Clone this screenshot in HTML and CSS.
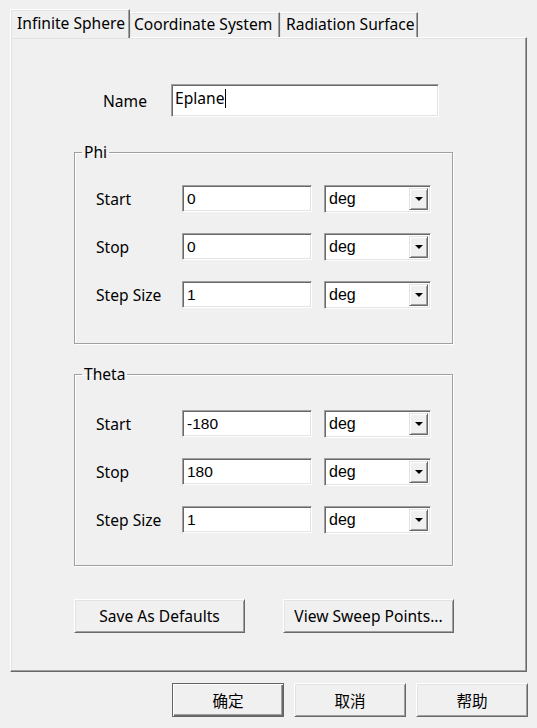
FILE: index.html
```html
<!DOCTYPE html>
<html>
<head>
<meta charset="utf-8">
<link rel="stylesheet" href="styles.css">
</head>
<body>
<div class="tabs">
  <div class="tab tab--active">Infinite Sphere</div>
  <div class="tab tab--coord">Coordinate System</div>
  <div class="tab tab--rad">Radiation Surface</div>
</div>
<div class="panel">
  <div class="name-row">
    <span class="name-label">Name</span>
    <div class="textbox textbox--name">Eplane<span class="caret"></span></div>
  </div>

  <fieldset class="group group--phi">
    <legend>Phi</legend>
    <div class="row"><span class="lbl">Start</span><div class="textbox num">0</div><div class="combo"><span class="combo-val">deg</span><span class="combo-btn"><span class="tri"></span></span></div></div>
    <div class="row"><span class="lbl">Stop</span><div class="textbox num">0</div><div class="combo"><span class="combo-val">deg</span><span class="combo-btn"><span class="tri"></span></span></div></div>
    <div class="row"><span class="lbl">Step Size</span><div class="textbox num">1</div><div class="combo"><span class="combo-val">deg</span><span class="combo-btn"><span class="tri"></span></span></div></div>
  </fieldset>

  <fieldset class="group group--theta">
    <legend>Theta</legend>
    <div class="row"><span class="lbl">Start</span><div class="textbox num">-180</div><div class="combo"><span class="combo-val">deg</span><span class="combo-btn"><span class="tri"></span></span></div></div>
    <div class="row"><span class="lbl">Stop</span><div class="textbox num">180</div><div class="combo"><span class="combo-val">deg</span><span class="combo-btn"><span class="tri"></span></span></div></div>
    <div class="row"><span class="lbl">Step Size</span><div class="textbox num">1</div><div class="combo"><span class="combo-val">deg</span><span class="combo-btn"><span class="tri"></span></span></div></div>
  </fieldset>

  <div class="action-row">
    <div class="btn btn--wide">Save As Defaults</div>
    <div class="btn btn--wide">View Sweep Points...</div>
  </div>
</div>
<div class="footer">
  <div class="btn btn--foot btn--default">确定</div>
  <div class="btn btn--foot">取消</div>
  <div class="btn btn--foot">帮助</div>
</div>
</body>
</html>
```

FILE: styles.css
```css
* { box-sizing: border-box; }
html, body { margin: 0; padding: 0; }
body {
  width: 537px;
  height: 728px;
  overflow: hidden;
  background: #f0f0f0;
  color: #000;
  font: 15.6px/20px "Noto Sans", "Noto Sans CJK SC", sans-serif;
}

/* Tabs */
.tabs {
  display: flex;
  align-items: flex-end;
  height: 37px;
  padding: 10px 0 0 10px;
}
.tab {
  height: 25px;
  line-height: 23px;
  border-top: 1px solid #fff;
  border-left: 1px solid #fff;
  border-right: 1px solid #696969;
  box-shadow: inset -1px 0 0 #a0a0a0, inset 1px 1px 0 #e3e3e3;
  background: #f0f0f0;
  white-space: nowrap;
}
.tab--active {
  position: relative;
  z-index: 1;
  height: 29px;
  margin-bottom: -1px;
  width: 120px;
  padding-left: 6px;
  line-height: 26px;
}
.tab--coord { width: 150px; padding-left: 4px; border-left: none; }
.tab--rad { width: 138px; padding-left: 6px; border-left: none; }

/* Panel */
.panel {
  margin-left: 10px;
  width: 517px;
  height: 635px;
  border-top: 1px solid #fff;
  border-left: 1px solid #fff;
  border-right: 1px solid #696969;
  border-bottom: 1px solid #696969;
  box-shadow: inset -1px -1px 0 #a0a0a0, inset 1px 1px 0 #e3e3e3;
  padding-top: 46px;
}

.name-row {
  display: flex;
  align-items: center;
  padding-left: 92px;
}
.name-label { width: 68px; }

.textbox {
  background: #fff;
  border: 1px solid;
  border-color: #a0a0a0 #fff #fff #a0a0a0;
  box-shadow: inset 1px 1px 0 #696969, inset -1px -1px 0 #e3e3e3;
  white-space: nowrap;
}
.textbox--name {
  width: 268px;
  height: 33px;
  padding: 3px 0 0 3px;
  line-height: 20px;
  display: flex;
  align-items: flex-start;
}
.caret {
  display: inline-block;
  width: 1px;
  height: 19px;
  background: #000;
  margin-left: 1px;
  margin-top: 1px;
}
.num {
  width: 130px;
  height: 27px;
  padding-left: 4px;
  line-height: 25px;
  font-family: "Liberation Sans", Arial, sans-serif;
  font-size: 15.5px;
}

/* Groups */
.group {
  margin: 0 0 0 63px;
  width: 379px;
  height: 202px;
  padding: 0;
  border: 1px solid #a0a0a0;
  box-shadow: 1px 1px 0 #fff, inset 1px 1px 0 #fff;
  min-inline-size: 0;
}
.group legend {
  margin-left: 7px;
  padding: 0 2px;
  line-height: 20px;
}
.group--phi { margin-top: 25px; padding-top: 23px; }
.group--theta { margin-top: 20px; padding-top: 26px; }

.row {
  display: flex;
  align-items: center;
  height: 27px;
  margin: 0 0 21px 21px;
}
.lbl { width: 86px; }

.combo {
  margin-left: 12px;
  width: 107px;
  height: 28px;
  background: #fff;
  border: 1px solid;
  border-color: #a0a0a0 #fff #fff #a0a0a0;
  box-shadow: inset 1px 1px 0 #696969, inset -1px -1px 0 #e3e3e3;
  display: flex;
  align-items: stretch;
  padding: 2px;
}
.combo-val {
  flex: 1;
  padding-left: 2px;
  line-height: 22px;
  font-family: "Liberation Sans", Arial, sans-serif;
  font-size: 16px;
}
.combo-btn {
  width: 19px;
  background: #f0f0f0;
  border-top: 1px solid #e3e3e3;
  border-left: 1px solid #e3e3e3;
  border-right: 1px solid #696969;
  border-bottom: 1px solid #696969;
  box-shadow: inset 1px 1px 0 #fff, inset -1px -1px 0 #a0a0a0;
  display: flex;
  align-items: center;
  justify-content: center;
}
.tri {
  width: 0;
  height: 0;
  border-left: 4px solid transparent;
  border-right: 4px solid transparent;
  border-top: 4px solid #000;
}

/* Buttons */
.btn {
  height: 34px;
  background: #f0f0f0;
  border-top: 1px solid #fff;
  border-left: 1px solid #fff;
  border-right: 1px solid #696969;
  border-bottom: 1px solid #696969;
  box-shadow: inset 1px 1px 0 #e3e3e3, inset -1px -1px 0 #a0a0a0;
  display: flex;
  align-items: center;
  justify-content: center;
  white-space: nowrap;
}
.action-row {
  display: flex;
  gap: 38px;
  margin: 33px 0 0 63px;
}
.btn--wide { width: 171px; }

.footer {
  display: flex;
  gap: 10px;
  padding: 11px 0 0 172px;
}
.btn--foot {
  width: 112px;
  font-family: "Noto Sans CJK SC", sans-serif;
}
.btn--default {
  border: 1px solid #646464;
  box-shadow: inset 1px 1px 0 #fff, inset -1px -1px 0 #696969, inset -2px -2px 0 #a0a0a0;
}
```
